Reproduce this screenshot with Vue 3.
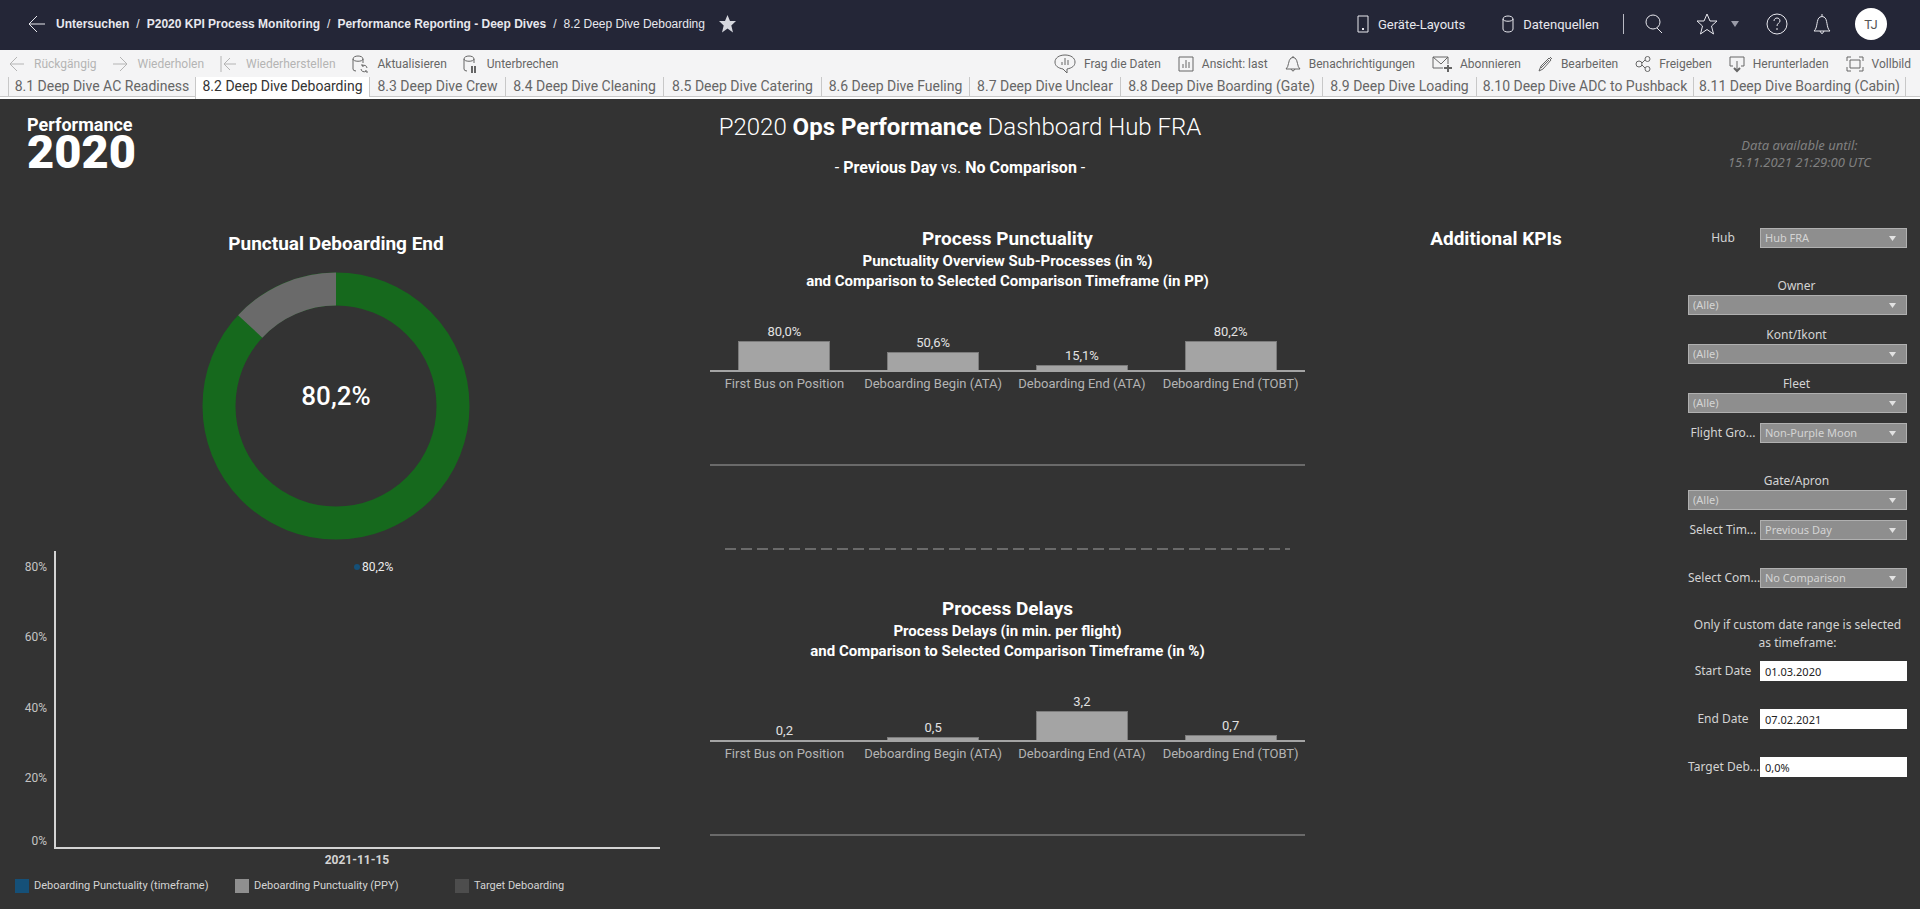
<script setup>
import { ref } from 'vue'

const crumbs = ['Untersuchen', 'P2020 KPI Process Monitoring', 'Performance Reporting - Deep Dives']

const leftTools = [
  { icon: 'undo', label: 'Rückgängig', off: true },
  { icon: 'redo', label: 'Wiederholen', off: true },
  { icon: 'revert', label: 'Wiederherstellen', off: true },
  { icon: 'refresh', label: 'Aktualisieren' },
  { icon: 'pause', label: 'Unterbrechen' },
]
const rightTools = [
  { icon: 'ask', label: 'Frag die Daten' },
  { icon: 'view', label: 'Ansicht: last' },
  { icon: 'bell', label: 'Benachrichtigungen' },
  { icon: 'mail', label: 'Abonnieren' },
  { icon: 'edit', label: 'Bearbeiten' },
  { icon: 'share', label: 'Freigeben' },
  { icon: 'download', label: 'Herunterladen' },
  { icon: 'full', label: 'Vollbild' },
]
const tabs = [
  '8.1 Deep Dive AC Readiness',
  '8.2 Deep Dive Deboarding',
  '8.3 Deep Dive Crew',
  '8.4 Deep Dive Cleaning',
  '8.5 Deep Dive Catering',
  '8.6 Deep Dive Fueling',
  '8.7 Deep Dive Unclear',
  '8.8 Deep Dive Boarding (Gate)',
  '8.9 Deep Dive Loading',
  '8.10 Deep Dive ADC to Pushback',
  '8.11 Deep Dive Boarding (Cabin)',
]
const activeTab = ref(1)

const icons = {
  undo: { w: 15, d: 'M15 11H1M8 4L1 11L8 18' },
  redo: { w: 15, d: 'M0 11H14M7 4L14 11L7 18' },
  revert: { w: 16, d: 'M1 3V19M16 11H4M10 5L4 11L10 17' },
  refresh: { w: 16, d: 'M1 6C1 2 11 2 11 6C11 9 1 9 1 6V16Q1 18 4 18M11 6V10M15 15A3 3 0 0 0 10 13M9 16A3 3 0 0 0 14 18M10 11V13H12M15 20V18H13' },
  pause: { w: 14, d: 'M1 6C1 2 11 2 11 6C11 9 1 9 1 6V16Q1 18 4 18M11 6V10', b: 'M9 13V20M12 13V20' },
  ask: { w: 22, d: 'M11 2C17 2 21 5 21 9C21 13 18 15 13 16V20L9 16C4 15 1 13 1 9C1 5 5 2 11 2ZM8 12V9M11 12V5M14 12V7' },
  view: { w: 16, d: 'M1 4H15V18H1ZM5 15V11M8 15V7M11 15V9' },
  bell: { w: 16, d: 'M1 16C4 14 3 7 6 5Q8 4 10 5C13 7 12 14 15 16ZM6 16Q8 20 10 16M8 5V3' },
  mail: { w: 20, d: 'M11 15H1V4H16V11M1 4L9 11L16 4', b: 'M16 12V19M12 15H20' },
  edit: { w: 15, d: 'M1 18L3 13L11 5L13 7L5 16ZM12 4L14 6M3 15L11 7' },
  share: { w: 16, d: 'M1 11a3 3 0 1 0 6 0a3 3 0 1 0 -6 0M10 6a2.5 2.5 0 1 0 5 0a2.5 2.5 0 1 0 -5 0M10 16a2.5 2.5 0 1 0 5 0a2.5 2.5 0 1 0 -5 0M7 10L10 7M7 12L10 15' },
  download: { w: 16, d: 'M4 13H1V4H15V13H12M8 8V17', b: 'M5 15L8 18L11 15' },
  full: { w: 18, d: 'M4 7H14V15H4ZM1 8V4H5M13 4H17V8M17 14V18H13M5 18H1V14' },
}

const ticks = ['80%', '60%', '40%', '20%', '0%']
const legend = [
  { label: 'Deboarding Punctuality (timeframe)', tone: 'blue' },
  { label: 'Deboarding Punctuality (PPY)', tone: 'light' },
  { label: 'Target Deboarding', tone: 'dark' },
]

const panels = [
  {
    title: 'Process Punctuality',
    lines: ['Punctuality Overview Sub-Processes (in %)', 'and Comparison to Selected Comparison Timeframe (in PP)'],
    dashed: true,
    bars: [
      { name: 'First Bus on Position', text: '80,0%', h: 29 },
      { name: 'Deboarding Begin (ATA)', text: '50,6%', h: 18 },
      { name: 'Deboarding End (ATA)', text: '15,1%', h: 5 },
      { name: 'Deboarding End (TOBT)', text: '80,2%', h: 29 },
    ],
  },
  {
    title: 'Process Delays',
    lines: ['Process Delays (in min. per flight)', 'and Comparison to Selected Comparison Timeframe (in %)'],
    dashed: false,
    bars: [
      { name: 'First Bus on Position', text: '0,2', h: 0 },
      { name: 'Deboarding Begin (ATA)', text: '0,5', h: 3 },
      { name: 'Deboarding End (ATA)', text: '3,2', h: 29 },
      { name: 'Deboarding End (TOBT)', text: '0,7', h: 5 },
    ],
  },
]

const filters = [
  { id: 'hub', label: 'Hub', value: 'Hub FRA' },
  { id: 'owner', label: 'Owner', value: '(Alle)', stacked: true },
  { id: 'kont', label: 'Kont/Ikont', value: '(Alle)', stacked: true },
  { id: 'fleet', label: 'Fleet', value: '(Alle)', stacked: true },
  { id: 'group', label: 'Flight Gro...', value: 'Non-Purple Moon' },
  { id: 'gate', label: 'Gate/Apron', value: '(Alle)', stacked: true },
  { id: 'time', label: 'Select Tim...', value: 'Previous Day' },
  { id: 'comp', label: 'Select Com...', value: 'No Comparison' },
]
const fields = ref([
  { id: 'start', label: 'Start Date', value: '01.03.2020' },
  { id: 'end', label: 'End Date', value: '07.02.2021' },
  { id: 'target', label: 'Target Deb...', value: '0,0%' },
])
</script>

<template>
  <div class="page">
    <header class="topbar">
      <button class="plain back" aria-label="Zurück">
        <svg width="17" height="18" viewBox="0 0 17 18"><path d="M17 9H1M9 1L1 9L9 17" /></svg>
      </button>
      <nav class="crumbs">
        <template v-for="c in crumbs" :key="c">
          <a href="#">{{ c }}</a><span>/</span>
        </template>
        <span>8.2 Deep Dive Deboarding</span>
      </nav>
      <svg class="solid" width="17" height="18" viewBox="0 0 17 18"><path d="M8.500 0L11 6H17L12.300 10.500L14 17.500L8.500 13.500L3 17.500L4.700 10.500L0 6H6Z" /></svg>
      <div class="topright">
        <button class="plain">
          <svg width="12" height="18" viewBox="0 0 12 18"><path d="M1 1H11V17H1ZM5 13L7 15M7 13L5 15" /></svg>Geräte-Layouts
        </button>
        <button class="plain sources">
          <svg width="12" height="18" viewBox="0 0 12 18"><path d="M1 4C1 0 11 0 11 4C11 7 1 7 1 4V14C1 18 11 18 11 14V4" /></svg>Datenquellen
        </button>
        <i class="divider"></i>
        <button class="plain search" aria-label="Suchen">
          <svg width="18" height="20" viewBox="0 0 18 20"><circle cx="8" cy="8" r="7" /><path d="M12 14L17 19" /></svg>
        </button>
        <button class="plain fav" aria-label="Favoriten">
          <svg width="22" height="22" viewBox="0 0 22 22"><path d="M11 1L14 8H21L15.500 13L17.500 21L11 16.500L4.500 21L6.500 13L1 8H8Z" /></svg>
          <svg class="caret" width="8" height="6" viewBox="0 0 8 6"><path d="M0 0H8L4 6Z" /></svg>
        </button>
        <button class="plain help" aria-label="Hilfe">
          <svg width="22" height="22" viewBox="0 0 22 22"><circle cx="11" cy="11" r="10" /><path d="M8 8C8 4 14 4 14 8C14 10 11 10 11 13M11 15V17" /></svg>
        </button>
        <button class="plain alerts" aria-label="Meldungen">
          <svg width="18" height="22" viewBox="0 0 18 22"><path d="M1 18C5 15 3 6 7 4Q9 3 11 4C15 6 13 15 17 18ZM7 18Q9 23 11 18M9 3V1" /></svg>
        </button>
        <button class="avatar">TJ</button>
      </div>
    </header>

    <div class="toolbar">
      <div class="group">
        <button v-for="t in leftTools" :key="t.label" class="plain tool" :disabled="t.off">
          <svg :width="icons[t.icon].w" height="22" :viewBox="`0 0 ${icons[t.icon].w} 22`">
            <path :d="icons[t.icon].d" /><path v-if="icons[t.icon].b" class="bold" :d="icons[t.icon].b" />
          </svg>{{ t.label }}
        </button>
      </div>
      <div class="group right">
        <button v-for="t in rightTools" :key="t.label" class="plain tool">
          <svg :width="icons[t.icon].w" height="22" :viewBox="`0 0 ${icons[t.icon].w} 22`">
            <path :d="icons[t.icon].d" /><path v-if="icons[t.icon].b" class="bold" :d="icons[t.icon].b" />
          </svg>{{ t.label }}
        </button>
      </div>
    </div>

    <nav class="tabs">
      <button v-for="(t, i) in tabs" :key="t" class="tab" :class="{ on: i === activeTab }" @click="activeTab = i">{{ t }}</button>
    </nav>

    <main class="board">
      <div class="head">
        <div class="logo"><span>Performance</span><strong>2020</strong></div>
        <div class="heading">
          <h1>P2020 <b>Ops Performance</b> Dashboard Hub FRA</h1>
          <p>- <b>Previous Day</b> vs. <b>No Comparison</b> -</p>
        </div>
        <p class="fresh">Data available until:<br />15.11.2021 21:29:00 UTC</p>
      </div>

      <div class="body">
        <section class="left">
          <h2>Punctual Deboarding End</h2>
          <div class="donut">
            <svg width="268" height="268" viewBox="-134 -134 268 268">
              <circle class="ring" r="117" />
              <circle class="ring rest" r="117" pathLength="1000" stroke-dasharray="131 869" stroke-dashoffset="-869" transform="rotate(-90)" />
            </svg>
            <strong>80,2%</strong>
          </div>
          <div class="trend">
            <div class="ylabels"><span v-for="m in ticks" :key="m">{{ m }}</span></div>
            <div class="plot"><div class="point"><i></i><span>80,2%</span></div></div>
            <div class="xlabel">2021-11-15</div>
          </div>
          <ul class="legend">
            <li v-for="l in legend" :key="l.label"><i :class="l.tone"></i>{{ l.label }}</li>
          </ul>
        </section>

        <section class="middle">
          <article v-for="p in panels" :key="p.title" class="panel">
            <h2>{{ p.title }}</h2>
            <h3><span v-for="l in p.lines" :key="l">{{ l }}</span></h3>
            <div class="bars">
              <div v-for="b in p.bars" :key="b.name" class="bar">
                <span>{{ b.text }}</span>
                <i v-if="b.h" :style="{ height: b.h + 'px' }"></i>
              </div>
            </div>
            <div class="names"><span v-for="b in p.bars" :key="b.name">{{ b.name }}</span></div>
            <div class="baseline"></div>
            <svg v-if="p.dashed" class="dash" height="2" width="100%"><line x1="0" y1="1" x2="100%" y2="1" /></svg>
          </article>
        </section>

        <section class="kpis"><h2>Additional KPIs</h2></section>

        <form class="filters" @submit.prevent>
          <div v-for="f in filters" :key="f.id" class="filter" :class="{ stacked: f.stacked }">
            <label :for="f.id">{{ f.label }}</label>
            <div class="pick">
              <select :id="f.id"><option>{{ f.value }}</option></select>
              <svg width="7" height="5" viewBox="0 0 7 5"><path d="M0 0H7L3.500 5Z" /></svg>
            </div>
          </div>
          <p class="note">Only if custom date range is selected<br />as timeframe:</p>
          <div v-for="f in fields" :key="f.id" class="filter">
            <label :for="f.id">{{ f.label }}</label>
            <input :id="f.id" v-model="f.value" type="text" />
          </div>
        </form>
      </div>
    </main>
  </div>
</template>

<style>
body {
  margin: 0;
  background: #333333;
}
</style>

<style scoped>
.page {
  display: flex;
  flex-direction: column;
  min-height: 100vh;
  background: #333333;
  font-family: Roboto, "Liberation Sans", sans-serif;
  font-size: 12px;
  color: #d4d4d4;
}
.page * {
  box-sizing: border-box;
}
h1, h2, h3, p, ul {
  margin: 0;
  padding: 0;
}
svg {
  flex: none;
  display: block;
  fill: none;
  stroke: currentColor;
}
.plain {
  display: flex;
  align-items: center;
  padding: 0;
  border: 0;
  background: none;
  color: inherit;
  font: inherit;
  white-space: nowrap;
}
.topbar {
  display: flex;
  align-items: center;
  height: 50px;
  padding: 0 33px 2px 28px;
  background: #242637;
  color: #e8e8ee;
  font-size: 13px;
  white-space: nowrap;
}
.crumbs {
  display: flex;
  gap: 7px;
  margin: 0 14px 0 11px;
  font-family: "Liberation Sans", sans-serif;
  font-size: 12px;
}
.crumbs a {
  color: inherit;
  font-weight: 700;
  text-decoration: none;
}
.solid {
  fill: #d6d7de;
  stroke: none;
}
.topright {
  display: flex;
  align-items: center;
  margin-left: auto;
}
.topright .plain {
  gap: 9px;
}
.topright .sources {
  margin-left: 37px;
}
.divider {
  width: 1px;
  height: 20px;
  margin: 0 21px 0 24px;
  background: #b9bac4;
}
.topright .fav {
  margin-left: 33px;
  gap: 13px;
}
.caret {
  fill: #9a9ba8;
  stroke: none;
}
.help {
  margin-left: 27px;
}
.alerts {
  margin: 0 24px 0 25px;
}
.avatar {
  width: 32px;
  height: 32px;
  padding: 0;
  border: 0;
  border-radius: 50%;
  background: #ffffff;
  color: #555555;
  font: 13px Roboto, sans-serif;
}
.toolbar {
  display: flex;
  justify-content: space-between;
  height: 27px;
  padding: 0 9px;
  background: #f4f4f5;
  color: #666666;
}
.group {
  display: flex;
  align-items: center;
  gap: 16px;
}
.group.right {
  gap: 17px;
}
.tool {
  gap: 10px;
}
.right .tool {
  gap: 8px;
}
.tool:disabled {
  color: #b4b4b4;
}
.bold {
  stroke-width: 2;
}
.tabs {
  display: grid;
  grid-template-columns: 187fr 174fr 136fr 158fr 158fr 148fr 151fr 202fr 154fr 217fr 213fr;
  padding: 0 14px 0 8px;
  height: 22px;
  background: linear-gradient(#f4f4f5 19px, #c8c8c8 19px, #c8c8c8 20px, #ffffff 20px);
}
.tab {
  height: 19px;
  padding: 0;
  border: 0;
  border-left: 1px solid #c8c8c8;
  background: none;
  color: #666666;
  font: 14px/19px Roboto, sans-serif;
  white-space: nowrap;
}
.tab:last-child {
  border-right: 1px solid #c8c8c8;
}
.tab.on {
  height: 22px;
  padding-bottom: 3px;
  background: #ffffff;
  color: #333333;
}
.board {
  flex: 1;
}
.head {
  display: grid;
  grid-template-columns: 1fr 2fr 1fr;
  min-height: 114px;
}
.logo {
  display: flex;
  flex-direction: column;
  padding: 16px 0 0 27px;
  color: #ffffff;
}
.logo span {
  font: 700 18px/20px Roboto, sans-serif;
}
.logo strong {
  font: 900 47px/34px Roboto, sans-serif;
}
.heading {
  padding-top: 14px;
  color: #ffffff;
  text-align: center;
}
.heading h1 {
  font-size: 24px;
  line-height: 28px;
  font-weight: 300;
}
.heading b {
  font-weight: 700;
}
.heading p {
  margin-top: 16px;
  font-size: 16px;
  line-height: 22px;
}
.fresh {
  justify-self: end;
  padding: 38px 49px 0 0;
  color: #808080;
  font: italic 13px/17px "Noto Sans", sans-serif;
  text-align: center;
}
.body {
  display: grid;
  grid-template-columns: 672fr 671fr 306fr 271fr;
}
h2 {
  color: #ffffff;
  font-size: 19px;
  line-height: 24px;
  font-weight: 700;
  text-align: center;
}
.left {
  min-width: 0;
  padding: 19px 12px 0 0;
}
.left h2,
.donut {
  margin-right: -12px;
}
.donut {
  display: grid;
  place-items: center;
  margin-top: 16px;
}
.donut svg,
.donut strong {
  grid-area: 1 / 1;
}
.donut strong {
  padding-bottom: 20px;
  color: #ffffff;
  font: 500 26px/30px Roboto, sans-serif;
}
.ring {
  stroke: #16691d;
  stroke-width: 33px;
}
.rest {
  stroke: #6a6a6a;
}
.trend {
  display: grid;
  grid-template-columns: 47px 1fr;
  column-gap: 7px;
  margin-top: 11px;
}
.ylabels {
  display: grid;
  grid-template-rows: 70fr 70fr 70fr 63fr 16px;
  padding-top: 8px;
  line-height: 16px;
  text-align: right;
  color: #c4c4c4;
}
.plot {
  position: relative;
  height: 298px;
  border-left: 2px solid #d4d4d4;
  border-bottom: 2px solid #d4d4d4;
}
.point {
  position: absolute;
  top: 8px;
  left: 50%;
  display: flex;
  align-items: center;
  gap: 2px;
  margin-left: -4px;
  line-height: 16px;
  color: #eeeeee;
}
.point i {
  width: 6px;
  height: 6px;
  border-radius: 50%;
  background: #155078;
}
.xlabel {
  grid-column: 2;
  padding-top: 3px;
  line-height: 16px;
  font-weight: 700;
  text-align: center;
}
.legend {
  display: grid;
  grid-template-columns: 220px 220px 1fr;
  margin: 10px 0 0 15px;
  list-style: none;
  font-size: 11px;
}
.legend li {
  display: flex;
  align-items: center;
  gap: 5px;
  line-height: 16px;
}
.legend i {
  width: 14px;
  height: 14px;
}
.blue {
  background: #155078;
}
.light {
  background: #8f8f8f;
}
.dark {
  background: #4d4d4d;
}
.middle {
  min-width: 0;
  padding: 14px 38px 0;
}
.panel h3 {
  color: #ffffff;
  font-size: 15px;
  line-height: 20px;
  font-weight: 700;
  text-align: center;
}
.panel h3 span {
  display: block;
}
.panel + .panel {
  margin-top: 47px;
}
.bars {
  display: grid;
  grid-template-columns: repeat(4, 1fr);
  align-items: end;
  height: 81px;
  border-bottom: 2px solid #a4a4a4;
}
.bar {
  display: flex;
  flex-direction: column;
  align-items: center;
  font-size: 13px;
  line-height: 18px;
  color: #e2e2e2;
}
.bar i {
  width: 62%;
  border: 1px solid #7c7c7c;
  border-bottom: 0;
  background: #a4a4a4;
}
.names {
  display: grid;
  grid-template-columns: repeat(4, 1fr);
  padding-top: 2px;
  font-size: 13px;
  line-height: 20px;
  color: #b4b4b4;
  text-align: center;
  white-space: nowrap;
}
.baseline {
  height: 2px;
  margin-top: 70px;
  background: #6a6a6a;
}
.dash {
  width: calc(100% - 30px);
  margin: 82px 15px 0;
  stroke: #6a6a6a;
  stroke-width: 2px;
  stroke-dasharray: 11 5;
}
.kpis {
  padding-top: 14px;
}
.filters {
  padding: 15px 13px 0 39px;
  font: 12px/18px "Noto Sans", sans-serif;
}
.filter {
  display: grid;
  grid-template-columns: 72px 1fr;
  height: 48px;
  align-content: start;
  align-items: center;
}
.filter label {
  padding-right: 2px;
  text-align: center;
  white-space: nowrap;
}
.stacked {
  grid-template-columns: 1fr;
  height: 49px;
}
.stacked label {
  line-height: 19px;
}
.pick {
  display: grid;
  align-items: center;
}
.pick select,
.pick svg {
  grid-area: 1 / 1;
}
.pick svg {
  justify-self: end;
  margin-right: 11px;
  fill: #e2e2e2;
  stroke: none;
  pointer-events: none;
}
select,
input {
  width: 100%;
  height: 20px;
  margin: 0;
  padding: 0 4px;
  border: 1px solid #b0b0b0;
  border-radius: 0;
  appearance: none;
  background: #8e8e8e;
  color: #d4d4d4;
  font: 11px/18px "Noto Sans", sans-serif;
}
input {
  border-color: #ffffff;
  background: #ffffff;
  color: #222222;
}
.note {
  height: 45px;
  text-align: center;
}
</style>
